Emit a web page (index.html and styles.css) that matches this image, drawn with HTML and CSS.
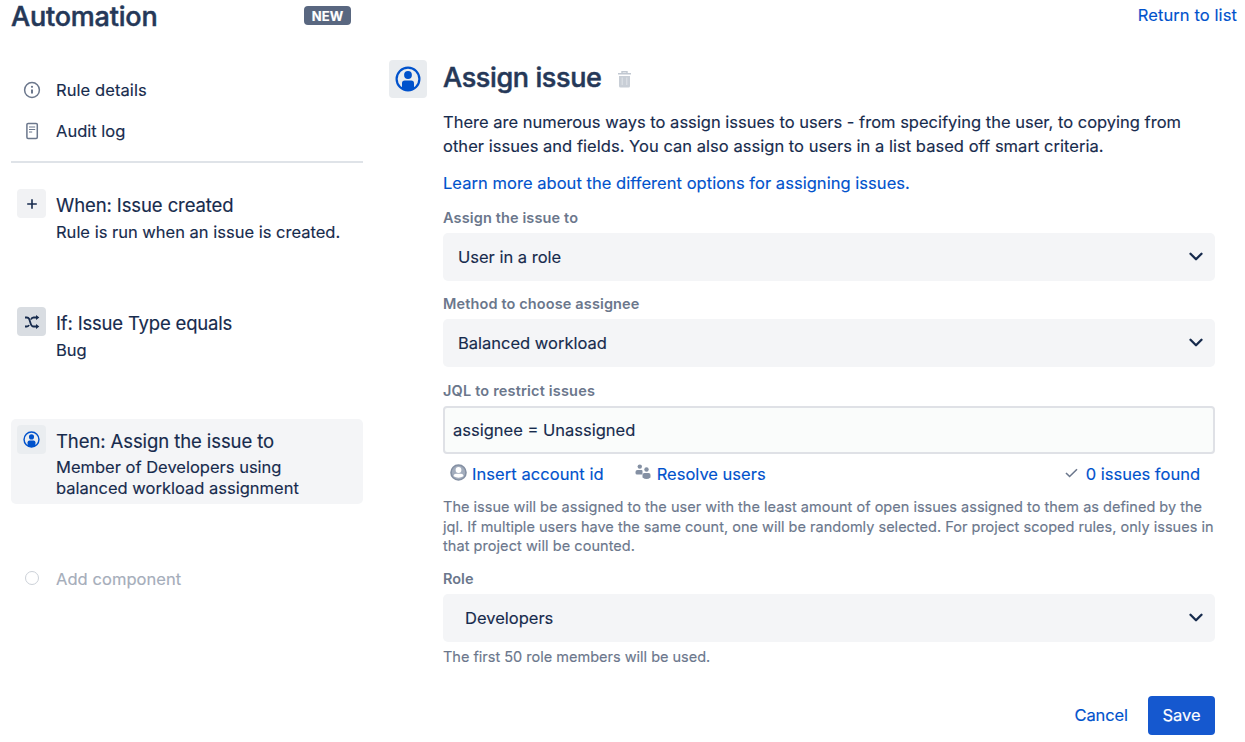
FILE: index.html
```html
<!DOCTYPE html>
<html lang="en">
<head>
<meta charset="utf-8">
<title>Automation</title>
<link rel="stylesheet" href="styles.css">
</head>
<body>
<svg class="sprite" width="0" height="0">
  <symbol id="user" viewBox="0 0 26 26">
    <circle cx="13" cy="13" r="11.4" fill="none" stroke="currentColor" stroke-width="2.2"/>
    <circle cx="13" cy="9" r="3.9" fill="currentColor"/>
    <path d="M7 22.800V17.200Q7 14.500 9.800 14.500H16.200Q19 14.500 19 17.200V22.800Q13 26 7 22.800Z" fill="currentColor"/>
  </symbol>
  <symbol id="chevron" viewBox="0 0 14 10">
    <path d="M1.500 1.800 7 7.300 12.500 1.800" fill="none" stroke="currentColor" stroke-width="2.300" stroke-linecap="round" stroke-linejoin="round"/>
  </symbol>
</svg>
<div class="page">
  <aside class="sidebar">
    <header class="brand">
      <h1 class="title"><span class="w-automation">Automation</span></h1>
      <span class="badge">NEW</span>
    </header>
    <nav class="nav">
      <a class="nav-item">
        <svg class="nav-icon" width="18" height="18" viewBox="0 0 18 18"><circle cx="9" cy="9" r="7.400" fill="none" stroke="currentColor" stroke-width="1.500"/><circle cx="9" cy="5.800" r="1.100" fill="currentColor"/><path d="M9 8.500V12.500" stroke="currentColor" stroke-width="2"/></svg>
        <span class="w-rule">Rule details</span>
      </a>
      <a class="nav-item">
        <svg class="nav-icon" width="18" height="18" viewBox="0 0 18 18"><rect x="3.900" y="1.400" width="10.400" height="15" rx="1.200" fill="none" stroke="currentColor" stroke-width="1.500"/><path d="M6 5H12.200M6 7.500H12.200M6 10H9.200" stroke="currentColor" stroke-width="1.200"/></svg>
        <span class="w-audit">Audit log</span>
      </a>
    </nav>
    <ol class="steps">
      <li class="step">
        <span class="tile tile-light"><svg width="12" height="12" viewBox="0 0 12 12"><path d="M6 1.200V10.800M1.200 6H10.800" stroke="currentColor" stroke-width="1.600"/></svg></span>
        <div class="step-text"><h3 class="step-title"><span class="w-when">When: Issue created</span></h3><p class="step-desc"><span class="w-run">Rule is run when an issue is created.</span></p></div>
      </li>
      <li class="step">
        <span class="tile tile-dark"><svg width="16" height="14" viewBox="0 0 16 14"><path d="M1 2.500H2.800Q4.400 2.500 5.200 4L6.800 9Q7.600 11.500 9.500 11.500H13M1 11.500H2.800Q4.400 11.500 5 10M7 4.500Q7.800 2.500 9.500 2.500H13" fill="none" stroke="currentColor" stroke-width="1.800"/><path d="M12 0 15.300 2.500 12 5ZM12 9 15.300 11.500 12 14Z" fill="currentColor"/></svg></span>
        <div class="step-text"><h3 class="step-title"><span class="w-if">If: Issue Type equals</span></h3><p class="step-desc"><span class="w-bug">Bug</span></p></div>
      </li>
      <li class="step step-active">
        <span class="tile tile-user"><svg width="17" height="17"><use href="#user"/></svg></span>
        <div class="step-text"><h3 class="step-title"><span class="w-then">Then: Assign the issue to</span></h3><p class="step-desc"><span class="w-member">Member of Developers using</span><br><span class="w-balanced">balanced workload assignment</span></p></div>
      </li>
    </ol>
    <a class="add">
      <span class="add-dot"></span>
      <span class="w-add">Add component</span>
    </a>
  </aside>

  <main class="main">
    <div class="topbar"><a class="link"><span class="w-return">Return to list</span></a></div>
    <div class="editor">
      <span class="hero-icon"><svg width="26" height="26"><use href="#user"/></svg></span>
      <section class="form">
        <div class="heading">
          <h2 class="title"><span class="w-assign">Assign issue</span></h2>
          <svg class="trash" width="13" height="17" viewBox="0 0 13 17"><path d="M0 2.700H13M4 2.500V.7H9V2.500" fill="none" stroke="#c1c8d1" stroke-width="1.400"/><path d="M1 5H12V15Q12 16.500 10.500 16.500H2.500Q1 16.500 1 15Z" fill="#c8ced6"/><path d="M4.200 6.500V14M8.800 6.500V14" stroke="#e0e4e9" stroke-width="1"/></svg>
        </div>
        <p class="intro"><span class="w-intro1">There are numerous ways to assign issues to users - from specifying the user, to copying from</span><br><span class="w-intro2">other issues and fields. You can also assign to users in a list based off smart criteria.</span></p>
        <a class="link learn"><span class="w-learn">Learn more about the different options for assigning issues.</span></a>

        <label class="label"><span class="w-l1">Assign the issue to</span></label>
        <div class="select"><span class="w-s1">User in a role</span><svg width="14" height="10"><use href="#chevron"/></svg></div>

        <label class="label"><span class="w-l2">Method to choose assignee</span></label>
        <div class="select"><span class="w-s2">Balanced workload</span><svg width="14" height="10"><use href="#chevron"/></svg></div>

        <label class="label label-jql"><span class="w-l3">JQL to restrict issues</span></label>
        <div class="input"><span class="w-jql">assignee = Unassigned</span></div>

        <div class="tools">
          <a class="link tool">
            <svg width="17" height="17" viewBox="0 0 17 17"><circle cx="8.500" cy="8.500" r="7.500" fill="#a3adbd" stroke="#8490a3" stroke-width="1.600"/><circle cx="8.500" cy="6" r="2.900" fill="#fff"/><path d="M3.500 12.300Q3.500 9.700 6 9.700H11Q13.500 9.700 13.500 12.300Q8.500 15 3.500 12.300Z" fill="#fff"/></svg>
            <span class="w-insert">Insert account id</span>
          </a>
          <a class="link tool tool-users">
            <svg width="16" height="16" viewBox="0 0 16 16" fill="#8490a3"><circle cx="4.800" cy="2.600" r="2.200"/><path d="M.5 9V8Q.5 6 2.500 6H6.500Q7.500 6 7.500 7V10.500H2Q.5 10.500 .5 9Z"/><circle cx="11.500" cy="5.500" r="2.200"/><path d="M7.500 11Q7.500 9 9.500 9H13.500Q15.500 9 15.500 11V13.500Q11.500 16.500 7.500 13.500Z"/></svg>
            <span class="w-resolve">Resolve users</span>
          </a>
          <a class="link tool tool-found">
            <svg width="13" height="10" viewBox="0 0 13 10"><path d="M1 5 4.600 8.500 12 1.300" fill="none" stroke="#6b778c" stroke-width="1.600"/></svg>
            <span class="w-found">0 issues found</span>
          </a>
        </div>
        <p class="help"><span class="w-h1">The issue will be assigned to the user with the least amount of open issues assigned to them as defined by the</span><br><span class="w-h2">jql. If multiple users have the same count, one will be randomly selected. For project scoped rules, only issues in</span><br><span class="w-h3">that project will be counted.</span></p>

        <label class="label label-role"><span class="w-l4">Role</span></label>
        <div class="select select-role"><span class="w-dev">Developers</span><svg width="14" height="10"><use href="#chevron"/></svg></div>
        <p class="help help-role"><span class="w-h4">The first 50 role members will be used.</span></p>

        <div class="actions">
          <a class="link"><span class="w-cancel">Cancel</span></a>
          <button class="save"><span class="w-save">Save</span></button>
        </div>
      </section>
    </div>
  </main>
</div>
</body>
</html>
```
FILE: styles.css
```css
* { box-sizing: border-box; margin: 0; padding: 0; }
body { font: 400 16.5px/24px Inter, "Liberation Sans", sans-serif; color: #172b4d; background: #fff; -webkit-text-stroke: .15px currentColor; }
svg { display: block; flex: none; }
.sprite { position: absolute; }
.page { display: flex; width: 1245px; height: 742px; overflow: hidden; }
.page span { white-space: nowrap; }

.sidebar { width: 352px; margin-left: 11px; flex: none; }
.brand { display: flex; height: 32px; align-items: center; }
.title { font-size: 27px; line-height: 32px; font-weight: 500; color: #253858; -webkit-text-stroke: .5px #253858; }
.brand .title { padding-top: 2px; }
.badge { display: flex; align-items: center; justify-content: center; width: 47px; height: 19px; margin: 0 12px 1px auto; border-radius: 4px; background: #596780; color: #fff; font-size: 13px; font-weight: 700; }
.nav { padding-top: 37px; height: 131px; border-bottom: 2px solid #dfe3e8; }
.nav-item { display: flex; align-items: center; height: 41px; padding-left: 12px; }
.nav-icon { margin-right: 15px; color: #6b778c; }

.steps { list-style: none; padding-top: 19px; }
.step { display: flex; height: 118px; padding: 7px 0 0 6px; }
.step-active { height: 85px; margin-top: 1px; padding-top: 6px; background: #f4f5f7; border-radius: 5px; }
.tile { display: flex; align-items: center; justify-content: center; width: 29px; height: 29px; margin-right: 10px; border-radius: 4px; flex: none; }
.tile-light { background: #f1f2f4; }
.tile-dark { background: #d9dde2; }
.tile-user { background: #eaedf0; color: #0052cc; }
.step-title { font-size: 18.500px; line-height: 26px; font-weight: 400; padding-top: 3px; }
.step-desc { font-size: 16.500px; line-height: 21px; padding-top: 4px; }
.step-active .step-desc { padding-top: 3px; }
.add { display: flex; align-items: center; height: 24px; margin-top: 63px; padding-left: 14px; color: #a5adba; }
.add-dot { width: 14px; height: 14px; margin: 0 17px 2px 0; border: 1px solid #ccd1d8; border-radius: 50%; }

.main { width: 874px; flex: none; margin-left: 8px; }
.topbar { display: flex; justify-content: flex-end; height: 60px; padding: 3px 8px 0 0; }
.link { color: #0052cc; }
.editor { display: flex; padding-left: 18px; }
.hero-icon { display: flex; align-items: center; justify-content: center; width: 38px; height: 38px; margin-right: 16px; border-radius: 4px; background: #e9ecef; color: #0052cc; flex: none; }
.form { width: 772px; }
.heading { display: flex; align-items: center; width: 188px; height: 37px; }
.heading .title { padding-bottom: 2px; }
.trash { margin: 2px 0 0 auto; }
.intro { padding-top: 13px; line-height: 24px; }
.learn { display: block; margin-top: 13px; line-height: 24px; }
.label { display: flex; align-items: flex-end; height: 38px; padding-bottom: 5px; font-size: 14.500px; line-height: 20px; font-weight: 600; color: #6b778c; -webkit-text-stroke: 0; }
.select { display: flex; align-items: center; justify-content: space-between; height: 48px; padding: 0 12px 0 15px; border-radius: 5px; background: #f4f5f7; }
.label-jql { height: 39px; }
.input { display: flex; align-items: center; height: 48px; padding-left: 8px; border: 2px solid #dfe1e6; border-radius: 4px; background: #fafcfb; }
.tools { display: flex; height: 39px; align-items: center; padding: 0 15px 0 7px; }
.tool { display: flex; align-items: center; }
.tool svg { margin: 0 5px 3px 0; }
.tool-users { margin-left: 31px; }
.tool-users svg { margin-right: 6px; }
.tool-found { margin-left: auto; }
.tool-found svg { margin: 0 8px 1px 0; }
.help { margin-top: 4px; font-size: 14.500px; line-height: 19.500px; color: #6b778c; }
.label-role { height: 38px; }
.select-role { padding-left: 22px; }
.help-role { margin-top: 5px; }
.actions { display: flex; align-items: center; justify-content: flex-end; gap: 20px; margin-top: 29.500px; }
.save { width: 67px; height: 39px; border: 0; border-radius: 4px; background: #1558cf; color: #fff; font: inherit; }

.w-automation { letter-spacing: -.2px; }
.w-assign { letter-spacing: -.38px; }
.w-return { letter-spacing: .1px; }
.w-rule { letter-spacing: .08px; }
.w-when { letter-spacing: -.1px; }
.w-if { letter-spacing: -.18px; }
.w-then { letter-spacing: -.09px; }
.w-intro2 { letter-spacing: .03px; }
.w-learn { letter-spacing: .04px; }
.w-l1, .w-l2 { letter-spacing: .13px; }
.w-l3 { letter-spacing: .18px; }
.w-insert { letter-spacing: .06px; }
.w-h1, .w-h2 { letter-spacing: .017px; }
.w-h3 { letter-spacing: .06px; }
.w-add { letter-spacing: .06px; }
.w-cancel { letter-spacing: -.1px; }
```
